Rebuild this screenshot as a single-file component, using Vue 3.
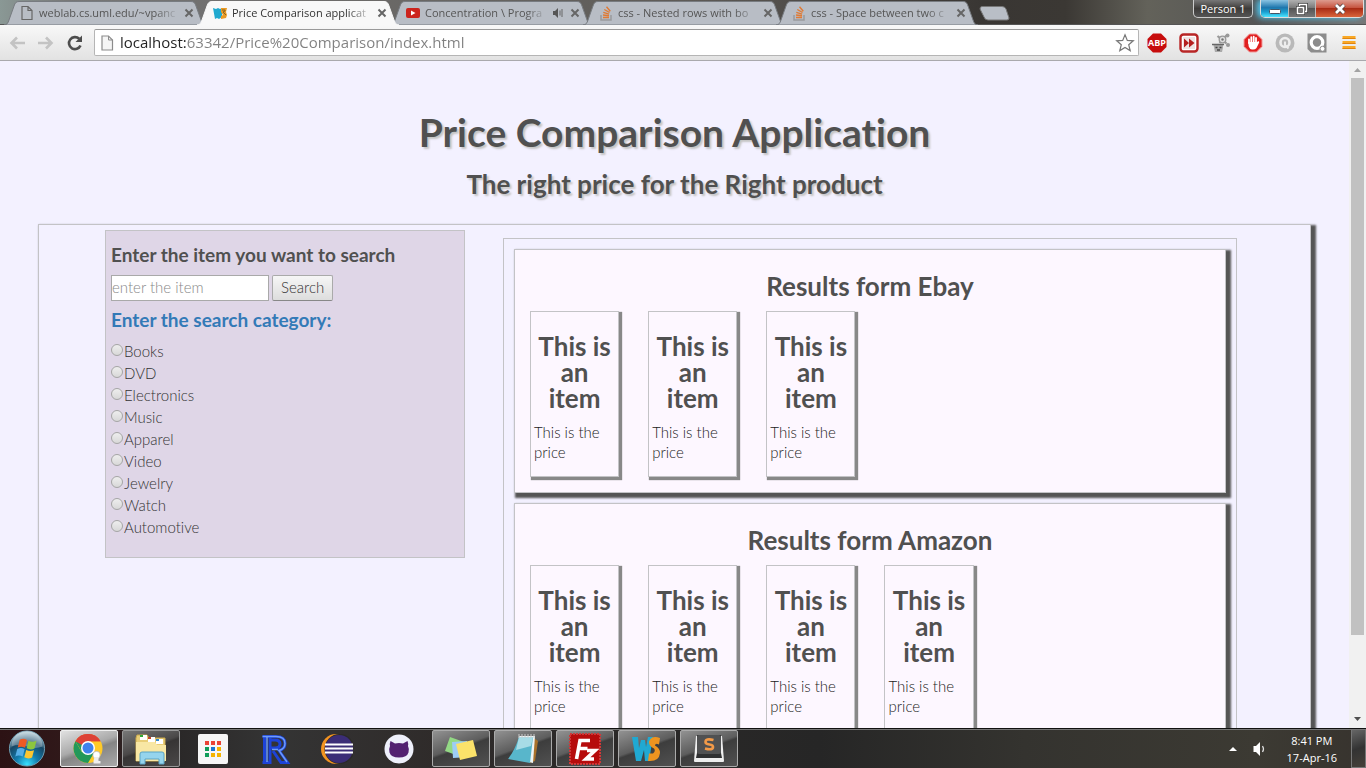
<script setup>
const tabs = [
  { title: 'weblab.cs.uml.edu/~vpanc', icon: 'file' },
  { title: 'Price Comparison applicat', icon: 'ws', active: true },
  { title: 'Concentration \\ Progra', icon: 'youtube', audio: true },
  { title: 'css - Nested rows with bo', icon: 'stack' },
  { title: 'css - Space between two c', icon: 'stack' }
]
const categories = ['Books', 'DVD', 'Electronics', 'Music', 'Apparel', 'Video', 'Jewelry', 'Watch', 'Automotive']
const stores = [
  { title: 'Results form Ebay', items: 3 },
  { title: 'Results form Amazon', items: 4 }
]
</script>

<template>
  <div class="screen">
    <header class="titlebar">
      <div class="tabs">
        <button v-for="(tab, i) in tabs" :key="i" type="button" class="tab" :class="{ active: tab.active }">
          <svg class="tab-shape" viewBox="0 0 202 24" preserveAspectRatio="none" aria-hidden="true">
            <path d="M0 24C3 24 4 22 5 19L10 5C11 2 12 .5 15 .5H187C190 .5 191 2 192 5L197 19C198 22 199 24 202 24Z" />
          </svg>
          <svg v-if="tab.icon === 'file'" class="fav" viewBox="0 0 16 16"><path d="M3 1.500h6l4 4v9H3zM9 1.500v4h4" fill="none" stroke="#666" stroke-width="1.200" /></svg>
          <svg v-else-if="tab.icon === 'ws'" class="fav" viewBox="0 0 16 16"><path d="M1 3l3 1 2-1 2 1 2-1v9l-3 2-2-1-2 1z" fill="#20a9cf" /><path d="M9 3h6l-1 4 1 3-1 3-5 1V11l2-1-2-3z" fill="#e99a24" /><path d="M10 5h3v1l-2 1 3 3" stroke="#8a651f" fill="none" /></svg>
          <svg v-else-if="tab.icon === 'youtube'" class="fav" viewBox="0 0 16 16"><rect x="1" y="3" width="14" height="10" rx="2" fill="#cc241d" /><path d="M6 5.500v5L10.500 8z" fill="#fff" /></svg>
          <svg v-else class="fav" viewBox="0 0 16 16"><path d="M3 10v5h10v-5" fill="none" stroke="#999b9d" stroke-width="1.500" /><path d="M5 12.500h6M5 10l6 .7M5.300 7.300l5.800 1.800M6.300 4.500l5.200 3M8.500 1.800l3.800 4.500" stroke="#e07a34" stroke-width="1.400" /></svg>
          <span class="tab-title">{{ tab.title }}</span>
          <svg v-if="tab.audio" class="audio" viewBox="0 0 12 12"><path d="M1 4h2l3-3v10L3 8H1z" fill="#555" /><path d="M8 3.500v5M10 2v8" stroke="#666" fill="none" /></svg>
          <svg class="close" viewBox="0 0 10 10"><path d="M1.500 1.500l7 7M8.500 1.500l-7 7" /></svg>
        </button>
        <svg class="new-tab" viewBox="0 0 31 15"><path d="M3 .5H23Q26 .5 27 3L30 12Q30 14 28 14H9Q6 14 5 11L1 3Q1 .5 3 .5Z" fill="#b9bec6" stroke="#777" /></svg>
      </div>
      <div class="window-controls">
        <button type="button" class="person">Person 1</button>
        <div class="wc-group">
          <button type="button" class="wc min" aria-label="Minimize"><svg viewBox="0 0 14 12"><rect x="1.500" y="6.500" width="11" height="4" rx="1" fill="#fff" stroke="#456" /></svg></button>
          <button type="button" class="wc max" aria-label="Restore"><svg viewBox="0 0 14 12"><path d="M4.500 1.500h7v7h-7z" fill="none" stroke="#444" stroke-width="3" /><path d="M4.500 1.500h7v7h-7z" fill="none" stroke="#fff" stroke-width="1.400" /><path d="M2.500 4.500h6v6h-6z" fill="#777" stroke="#444" stroke-width="3" /><path d="M2.500 4.500h6v6h-6z" fill="none" stroke="#fff" stroke-width="1.600" /></svg></button>
          <button type="button" class="wc cls" aria-label="Close"><svg viewBox="0 0 14 12"><path d="M3 2l8 8M11 2l-8 8" stroke="#544" stroke-width="4.500" /><path d="M3 2l8 8M11 2l-8 8" stroke="#fff" stroke-width="2.700" /></svg></button>
        </div>
      </div>
    </header>

    <nav class="toolbar">
      <button type="button" class="nav" aria-label="Back"><svg viewBox="0 0 18 18"><path d="M17 9H4M9 3.500L3.500 9 9 14.500" fill="none" stroke="#c3c3c3" stroke-width="2.600" /></svg></button>
      <button type="button" class="nav" aria-label="Forward"><svg viewBox="0 0 18 18"><path d="M1 9h13M9 3.500L14.500 9 9 14.500" fill="none" stroke="#c3c3c3" stroke-width="2.600" /></svg></button>
      <button type="button" class="nav" aria-label="Reload"><svg viewBox="0 0 18 18"><path d="M14.500 11.500A6 6 0 1 1 13.200 4.800" fill="none" stroke="#4d4d4d" stroke-width="2.600" /><path d="M16 1.500v6.500H9.500z" fill="#4d4d4d" /></svg></button>
      <div class="omnibox">
        <svg class="page-icon" viewBox="0 0 16 18"><path d="M3 2h6.500l4 4v10H3z" fill="#f5f5f5" stroke="#8c8c8c" stroke-width="1.200" /><path d="M9.500 2v4h4" fill="none" stroke="#8c8c8c" /></svg>
        <input class="url" type="text" aria-label="Address" value="localhost:63342/Price%20Comparison/index.html" />
        <svg class="star" viewBox="0 0 20 20"><path d="M10 1.800l2.300 5.600 6 .4-4.600 3.900 1.500 5.900-5.200-3.200-5.200 3.200 1.500-5.900L1.700 7.800l6-.4z" fill="#fff" stroke="#777" stroke-width="1.200" /></svg>
      </div>
      <button type="button" class="ext" aria-label="Adblock Plus"><svg viewBox="0 0 20 20"><path d="M6 .5h8L19.500 6v8L14 19.500H6L.5 14V6z" fill="#c70d0d" /><text x="10" y="13" text-anchor="middle" class="abp">ABP</text></svg></button>
      <button type="button" class="ext" aria-label="Skip ahead"><svg viewBox="0 0 20 20"><rect x="1.500" y="1.500" width="17" height="17" rx="3" fill="#fff" stroke="#b82626" stroke-width="2.400" /><rect x="4" y="4" width="12" height="12" fill="#eee4e4" /><path d="M5 5.500L10 10l-5 4.500zM10 5.500l5.500 4.500-5.500 4.500z" fill="#b51f1f" /></svg></button>
      <button type="button" class="ext" aria-label="Privacy"><svg viewBox="0 0 20 20"><path d="M2.500 12h9.500v2.500l-1 4.500H4l-1-4.500z" fill="#aaa" /><path d="M1 11.500h12" stroke="#666" stroke-width="1.500" /><path d="M6.500 3l9 7.500M15.500 2.500l-7 7.500" stroke="#9a9a9a" stroke-width="2.200" /><circle cx="11.500" cy="6.500" r="3.300" fill="#ddd" stroke="#999" stroke-width="1.300" /><circle cx="11.500" cy="6.500" r="1.200" fill="#777" /><circle cx="16.500" cy="2.500" r="2" fill="#999" /><circle cx="17" cy="12" r="2" fill="#999" /><path d="M4.500 14.500h2M8.500 14.500h2M6 17h3" stroke="#444" stroke-width="1.300" /></svg></button>
      <button type="button" class="ext" aria-label="AdBlock"><svg viewBox="0 0 20 20"><path d="M6.500 1h7L19 6.500v7L13.500 19h-7L1 13.500v-7z" fill="#e01f1f" stroke="#f39a9a" /><path d="M6 10V6.500M8.300 10V4.200M10.700 10V3.700M13 10V5" stroke="#fff" stroke-width="1.800" stroke-linecap="round" /><path d="M5.200 9h8.700l1.800-1 .5 1.500-2.700 5.500q-1.500 2-4.500 1.500-2.500-.5-3.300-3z" fill="#fff" /></svg></button>
      <button type="button" class="ext" aria-label="Grooveshark"><svg viewBox="0 0 20 20"><circle cx="10" cy="10" r="9.500" fill="#b9b9b9" /><circle cx="10" cy="9.500" r="4.500" fill="none" stroke="#eee" stroke-width="2.600" /><path d="M10 8.500v3.500l3.500 3.500" fill="none" stroke="#eee" stroke-width="2" /></svg></button>
      <button type="button" class="ext" aria-label="Quick search"><svg viewBox="0 0 20 20"><path d="M.5.5h19v19H4L.5 16z" fill="#8c8c8c" /><circle cx="10" cy="9.500" r="5.800" fill="none" stroke="#fff" stroke-width="3.200" /><circle cx="15.500" cy="15.800" r="2.500" fill="#fff" stroke="#8c8c8c" /></svg></button>
      <button type="button" class="ext" aria-label="Menu"><svg viewBox="0 0 20 20"><path d="M3.500 4.500h13M3.500 9.500h13M3.500 14.500h13" stroke="#f9a825" stroke-width="3" /><path d="M3.500 5.500h13M3.500 10.500h13M3.500 15.500h13" stroke="#e08510" /></svg></button>
    </nav>

    <div class="viewport">
      <main class="page">
        <h1>Price Comparison Application</h1>
        <h2 class="tagline">The right price for the Right product</h2>
        <div class="board">
          <form class="search" @submit.prevent>
            <label class="heading" for="item">Enter the item you want to search</label>
            <div class="search-row">
              <input id="item" type="text" placeholder="enter the item" />
              <button type="submit">Search</button>
            </div>
            <h3 class="heading category"><a href="#">Enter the search category:</a></h3>
            <label v-for="c in categories" :key="c" class="choice"><input type="radio" name="category" :value="c" />{{ c }}</label>
          </form>
          <div class="results">
            <section v-for="s in stores" :key="s.title" class="store">
              <h2>{{ s.title }}</h2>
              <div class="items">
                <article v-for="n in s.items" :key="n" class="item">
                  <h2>This is an item</h2>
                  <p>This is the price</p>
                </article>
              </div>
            </section>
          </div>
        </div>
      </main>
      <div class="scrollbar" aria-hidden="true">
        <svg viewBox="0 0 17 17"><path d="M5 11h7L8.500 7z" fill="#a3a3a3" /></svg>
        <div class="track"><div class="thumb"></div></div>
        <svg viewBox="0 0 17 17"><path d="M5 6h7L8.500 10z" fill="#505050" /></svg>
      </div>
    </div>

    <footer class="taskbar">
      <button type="button" class="start" aria-label="Start">
        <svg viewBox="0 0 40 40">
          <defs>
            <radialGradient id="orb" cx=".5" cy=".95" r=".9"><stop offset="0" stop-color="#39e2ff" /><stop offset=".35" stop-color="#137dae" /><stop offset=".7" stop-color="#174866" /><stop offset="1" stop-color="#a8c4d0" /></radialGradient>
          </defs>
          <circle cx="20" cy="20" r="18" fill="url(#orb)" stroke="#6f9fb4" />
          <path d="M4 18A16 16 0 0 1 36 18Q28 21 20 18T4 18Z" fill="#fff" opacity=".3" />
          <path d="M12.500 11q4-2 7.500.3l-2 8q-4-2-7.500-.2z" fill="#ee5a24" />
          <path d="M21.500 12q4 2 8.200 0l-2 8q-4 2-8-.2z" fill="#8cc63e" />
          <path d="M10 20.500q4-2 7.600.2l-2 7.600q-4-2-7.600-.2z" fill="#56aee6" />
          <path d="M19.200 21.500q4 2 8 .2l-2 7.500q-4 2-8-.2z" fill="#fdc62f" />
        </svg>
      </button>
      <button type="button" class="task current" aria-label="Chrome">
        <svg viewBox="0 0 32 32"><circle cx="15" cy="15.500" r="14.500" fill="#ffca28" /><path d="M15 15.500L2.400 8.300A14.500 14.500 0 0 1 27.600 8.300H15z" fill="#dd4237" /><path d="M2.400 8.300A14.500 14.500 0 0 0 15 30l6.200-10.500L8.700 19z" fill="#22985a" /><path d="M2.400 8.300L9 19l6-10.500z" fill="#22985a" /><path d="M2.400 8.300A14.500 14.500 0 0 1 27.600 8.300H15L9 12z" fill="#dd4237" /><circle cx="15" cy="15" r="7" fill="#fff" /><circle cx="15" cy="15" r="5.500" fill="#3e82ee" /><circle cx="23.500" cy="22" r="3.700" fill="#fff" stroke="#aaa" stroke-width=".6" /><path d="M21.500 24h4v4h2v2.500h-7V28z" fill="#eee" /></svg>
      </button>
      <button type="button" class="task framed explorer" aria-label="Explorer">
        <svg viewBox="0 0 32 32"><path d="M1 5l1-3h10l2 3h16v23H1z" fill="#e9ce77" stroke="#c9a94e" /><path d="M5 2h7v5H5zM13 4h7v5h-7zM21 6h7v5h-7z" fill="#fff" /><path d="M5 2h3v2H5z" fill="#2faa38" /><path d="M13 4h3v2h-3z" fill="#c4442b" /><path d="M21 6h3v2h-3z" fill="#3489cf" /><path d="M1 9h19l2 3h9v16H1z" fill="#f8e7a4" /><path d="M5 31V21q0-2 2-2h20q2 0 2 2v10h-5v-5H10v5z" fill="#95d4ed" stroke="#5aa4c5" /></svg>
      </button>
      <button type="button" class="task" aria-label="Apps">
        <svg viewBox="0 0 32 32"><rect x="1" y="1" width="30" height="30" rx="2" fill="#f6f6f6" /><path d="M8 8h4v4H8zM14 8h4v4h-4zM20 8h4v4h-4z" fill="#ea4335" /><path d="M8 14h4v4H8zM8 20h4v4H8z" fill="#0f9d58" /><path d="M14 14h4v4h-4z" fill="#1976d2" /><path d="M20 14h4v4h-4zM14 20h4v4h-4zM20 20h4v4h-4z" fill="#f5b400" /></svg>
      </button>
      <button type="button" class="task" aria-label="R">
        <svg viewBox="0 0 32 32"><path d="M3.500 3.500H17q9 0 9 7 0 5.500-6 7l8.500 12H22l-8-11.500M5.500 3.500v26M11 3.500v26M3.500 29.500h9M11 7h5q5 0 5 4t-5 4h-5" fill="none" stroke="#1d43d8" stroke-width="3" /><path d="M3.500 3.500H17q9 0 9 7 0 5.500-6 7l8 11.500M8 4v25M13 16.500h6" fill="none" stroke="#6f9df8" stroke-width="1.500" /></svg>
      </button>
      <button type="button" class="task" aria-label="Eclipse">
        <svg viewBox="0 0 32 32"><circle cx="15" cy="16" r="15" fill="#f39421" /><circle cx="18.500" cy="16" r="15" fill="#2b2a29" /><circle cx="18" cy="16" r="14" fill="#3b2d77" /><path d="M4 11.500h28M4 15.500h28M4 19.500h28" stroke="#fff" stroke-width="1.800" /></svg>
      </button>
      <button type="button" class="task" aria-label="GitHub">
        <svg viewBox="0 0 32 32"><circle cx="16" cy="16" r="14.500" fill="#eef0fb" /><path d="M7.500 8l4.500 2.500q4-1 8 0L24.500 8q1 2.500.5 5 1.500 3 .5 6.500-1.500 5-9.500 5t-9.500-5q-1-3.500.5-6.500-.5-2.500.5-5z" fill="#522171" /></svg>
      </button>
      <button type="button" class="task framed" aria-label="Sticky Notes">
        <svg viewBox="0 0 32 32"><path d="M5 4l14 5-5 14L0 18z" fill="#93d985" /><path d="M7 9l15-1 1 16-15 1z" fill="#9ecdf5" /><path d="M11 11l17-4 4 16-17 4z" fill="#fbe26a" /></svg>
      </button>
      <button type="button" class="task framed" aria-label="Notepad">
        <svg viewBox="0 0 32 32"><path d="M27 5l4 3-3 20-5 2z" fill="#a9712b" /><path d="M12 3h16l-2 27-4-1z" fill="#edf4f5" /><path d="M12 4h14l-3 26L1 26Q8 17 12 4z" fill="#58b6cb" /><path d="M12 4h14l-2 9-15 4z" fill="#a7dce6" /><path d="M12 1v4M15 1v4M18 1v4M21 1v4M24 1v4M27 1v4" stroke="#ccc" /></svg>
      </button>
      <button type="button" class="task framed" aria-label="FileZilla">
        <svg viewBox="0 0 32 32"><rect x="1" y="1" width="30" height="30" fill="#b60c0c" stroke="#cf3838" stroke-width="2" stroke-dasharray="2 1" /><path d="M7.500 26L11 7.500h10M9.500 15.500h9M18 17.500h8l-9 8.500h8" fill="none" stroke="#fff" stroke-width="3.600" /></svg>
      </button>
      <button type="button" class="task framed" aria-label="WebStorm">
        <svg viewBox="0 0 32 32"><path d="M1 4l4 24h5l3-11 1 11h4l4-24h-5l-2 10-1-7h-4l-2 8-1-11z" fill="#20a9d2" /><path d="M29 5q-9-3-11 4 0 4 5 6.500 2 2.500-1 5h-4l-1 7.500q11 1 12-8 0-5-5-7.500 0-3 4-1z" fill="#ed9420" /></svg>
      </button>
      <button type="button" class="task framed" aria-label="Sublime Text">
        <svg viewBox="0 0 32 32"><path d="M3 3L1 28q0 1 1 1h28q1 0 1-1L29 3z" fill="#eee" /><path d="M4 2h24v18l1 5H3l1-5z" fill="#2f3031" /><rect x="4" y="2" width="24" height="19" rx="2" fill="#505152" /><path d="M20.500 7q-8-2-8 2 0 2 4 2.500t3.500 3q-1 3-8 1" fill="none" stroke="#f39a48" stroke-width="2.600" /></svg>
      </button>
      <div class="tray">
        <svg class="up" viewBox="0 0 10 6"><path d="M1 5l4-4 4 4z" fill="#fff" /></svg>
        <svg class="volume" viewBox="0 0 16 16"><path d="M1.500 5H4l4-4v14l-4-4H1.500z" fill="#fff" /><path d="M10.500 5q2 3 0 6" fill="none" stroke="#ddd" stroke-width="1.300" /></svg>
        <div class="clock"><span>8:41 PM</span><span>17-Apr-16</span></div>
        <button type="button" class="desktop" aria-label="Show desktop"></button>
      </div>
    </footer>
  </div>
</template>

<style>
body { margin: 0; }
</style>

<style scoped>
* { box-sizing: border-box; }
button { font: inherit; color: inherit; margin: 0; padding: 0; border: 0; background: none; }
svg { display: block; flex: none; }
h1, h2, h3, p { margin: 0; }
.screen { height: 100vh; display: flex; flex-direction: column; overflow: hidden; font-family: "Open Sans", "Noto Sans", sans-serif; }

.titlebar { flex: none; height: 25px; display: flex; justify-content: space-between; align-items: flex-start; background: linear-gradient(90deg, #8a9895 0, #777 5%, #5e5b57 50%, #393633 72%, #3b3834 78%, #63625a 84%, #555 92%, #777 100%); border-bottom: 1px solid #555; }
.tabs { display: flex; padding: 1px 0 0 4px; }
.tab { position: relative; width: 202px; height: 24px; margin-right: -9px; padding: 0 12px 0 15px; display: flex; align-items: center; font-size: 11px; line-height: 20px; color: #555; }
.tab-shape { position: absolute; inset: 0; width: 100%; height: 100%; fill: #b8bdc5; stroke: #777b80; }
.tab.active { z-index: 1; color: #333; }
.active .tab-shape { fill: #f8f8f8; stroke: #f8f8f8; }
.fav { position: relative; width: 16px; height: 16px; }
.tab-title { position: relative; flex: 1; min-width: 0; margin: 0 4px; text-align: left; white-space: nowrap; overflow: hidden; mask-image: linear-gradient(90deg, #000 82%, transparent); }
.audio { position: relative; width: 12px; height: 12px; margin-right: 6px; }
.close { position: relative; width: 10px; height: 10px; fill: none; stroke: #666; stroke-width: 2; }
.new-tab { width: 31px; height: 15px; margin: 5px 0 0 10px; }
.window-controls { display: flex; gap: 7px; margin-right: 2px; }
.person { width: 60px; height: 18px; border: 1px solid #ccc; border-top: 0; border-radius: 0 0 5px 5px; background: linear-gradient(#777, #3d3b39 50%, #555); color: #fff; font-size: 11px; line-height: 16px; }
.wc-group { display: flex; height: 18px; border: 1px solid #ddd; border-top: 0; border-radius: 0 0 5px 5px; overflow: hidden; box-shadow: -3px 0 6px #4cc8f2; }
.wc { display: flex; align-items: center; justify-content: center; border-right: 1px solid #bbb; }
.wc svg { width: 14px; height: 12px; }
.min { width: 28px; background: linear-gradient(#8bc4e3, #1d76ad 45%, #1a9fd0 70%, #4be4ff); }
.max { width: 27px; background: linear-gradient(#b0b0b0, #777 48%, #555 50%, #777); }
.cls { width: 47px; border: 0; background: linear-gradient(#dd9b8e, #c5503b 48%, #a92c15 50%, #d8653c); }

.toolbar { flex: none; height: 36px; display: flex; align-items: center; padding: 0 7px 0 7px; background: linear-gradient(#f8f8f8, #e2e2e2); border-bottom: 1px solid #a9a9ad; }
.nav { width: 20px; height: 20px; margin-right: 9px; }
.nav svg { width: 18px; height: 18px; margin: auto; }
.omnibox { flex: 1; min-width: 0; height: 27px; display: flex; align-items: center; margin-right: 8px; padding: 0 3px 0 4px; background: #fff; border: 1px solid #b5b5b5; border-top-color: #999; border-radius: 2px; }
.page-icon { width: 16px; height: 18px; }
.url { flex: 1; min-width: 0; margin-left: 5px; padding: 0 0 2px; border: 0; outline: 0; font: 15px/20px "Open Sans", sans-serif; color: transparent; background: linear-gradient(90deg, #222 66px, #808080 66px); background-clip: text; -webkit-background-clip: text; }
.star { width: 20px; height: 20px; }
.ext { width: 20px; height: 20px; margin-right: 12px; }
.ext:last-child { margin-right: 0; }
.ext svg { width: 20px; height: 20px; }
.abp { font: bold 9px "Open Sans", sans-serif; fill: #fff; }

.viewport { flex: 1; min-height: 0; display: flex; }
.page { flex: 1; min-width: 0; overflow: hidden; padding: 51px 38px 0; background: #f3f1ff; color: #222; font-family: Lato, sans-serif; font-weight: 300; font-size: 15px; line-height: 20px; font-variant-ligatures: none; }
h1, h2, .heading { font-weight: 700; color: #505050; }
h1 { font-size: 39px; line-height: 40px; text-align: center; text-shadow: 2px 2px 2px #c4c4c4; }
h2 { font-size: 26px; line-height: 26px; text-align: center; }
.tagline { margin: 19px 0 27px; text-shadow: 2px 2px 2px #c4c4c4; }
.board { display: grid; grid-template-columns: 360fr 734fr; column-gap: 38px; align-items: start; padding: 5px 73px 20px 66px; border: 1px solid #c3c3c6; box-shadow: 3px 3px 2px 2px #555; }
.search { padding: 14px 5px 19px; background: #dfd6e7; border: 1px solid #c3c3c6; color: #333; }
.heading { display: block; font-size: 19px; line-height: 20px; }
.search-row { display: flex; gap: 3px; margin: 10px 0 9px; }
.search-row input { width: 158px; height: 26px; padding: 0 0 2px; border: 1px solid #a9a9a9; background: #fff; font: inherit; }
.search-row input::placeholder { color: #888; opacity: 1; }
.search-row button { height: 26px; padding: 0 8px 2px; border: 1px solid #aaa; border-bottom-color: #888; border-radius: 2px; background: linear-gradient(#f6f6f6, #ddd); }
.category { margin-bottom: 10px; }
.category a { color: #337ab7; text-decoration: none; }
.choice { display: flex; align-items: center; line-height: 22px; }
.choice input { appearance: none; width: 12px; height: 12px; margin: 0 1px 3px 0; border: 1px solid #a5a5a5; border-radius: 50%; background: linear-gradient(#eee, #d8d8d8); }
.results { display: grid; gap: 10px; margin-top: 8px; padding: 10px; border: 1px solid #c3c3c6; }
.store { padding: 23px 15px 15px; background: #fdf7ff; border: 1px solid #c3c3c6; box-shadow: 3px 3px 2px 2px #555; }
.items { display: grid; grid-template-columns: repeat(6, 1fr); gap: 29px; margin-top: 12px; }
.item { padding: 21px 3px 14px; border: 1px solid #c3c3c6; box-shadow: 2px 2px 1px 1px #888; }
.item p { margin-top: 11px; }

.scrollbar { flex: none; width: 17px; display: flex; flex-direction: column; background: #f1f1f1; }
.scrollbar svg { width: 17px; height: 17px; }
.track { flex: 1; padding: 0 2px; }
.thumb { height: 88%; background: #c1c1c1; }

.taskbar { flex: none; height: 40px; display: flex; align-items: stretch; gap: 4px; background: linear-gradient(90deg, #2c1214 0, #30191a 5%, #2a2828 13%, #343434 20%, #2f2b2a 32%, #262626 60%, #34332f 75%, #3c3a33 92%, #37332e 100%); border-top: 1px solid #111; box-shadow: inset 0 1px #777; }
.start { width: 56px; padding-left: 7px; }
.start svg { width: 40px; height: 39px; }
.task { width: 58px; margin: 1px 0; display: flex; align-items: center; justify-content: center; border: 1px solid transparent; border-radius: 2px; }
.task svg { width: 32px; height: 32px; }
.framed { border-color: #aaa; background: linear-gradient(160deg, #929292, #5d5d5d 45%, #3d3d3d 50%, #515151); }
.explorer { border-color: #999; background: linear-gradient(160deg, #777, #4a4848 45%, #373535 50%, #4a4848); }
.current { border-color: #eee; background: linear-gradient(160deg, #e1e1e1, #aaa 45%, #858585 55%, #aaa); }
.tray { margin-left: auto; display: flex; align-items: center; }
.up { width: 10px; height: 6px; margin-right: 14px; }
.volume { width: 16px; height: 16px; margin-right: 19px; }
.clock { display: flex; flex-direction: column; align-items: center; font-size: 11px; line-height: 17px; color: #fff; margin-right: 14px; }
.desktop { align-self: stretch; width: 15px; border: 1px solid #777; background: linear-gradient(160deg, #666, #333 50%, #454039); }
</style>
